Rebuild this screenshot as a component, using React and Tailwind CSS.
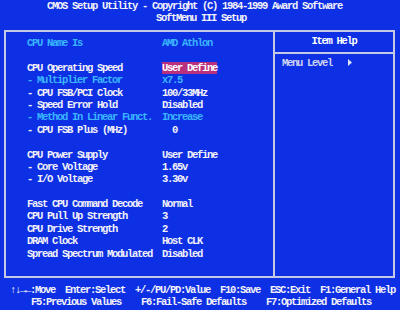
import React from "react";

const rows = [
  { l: "CPU Name Is", v: "AMD Athlon", c: true },
  null,
  { l: "CPU Operating Speed", v: "User Define", hl: true },
  { l: "- Multiplier Factor", v: "x7.5", c: true },
  { l: "- CPU FSB/PCI Clock", v: "100/33MHz" },
  { l: "- Speed Error Hold", v: "Disabled" },
  { l: "- Method In Linear Funct.", v: "Increase", c: true },
  { l: "- CPU FSB Plus (MHz)", v: "  0" },
  null,
  { l: "CPU Power Supply", v: "User Define" },
  { l: "- Core Voltage", v: "1.65v" },
  { l: "- I/O Voltage", v: "3.30v" },
  null,
  { l: "Fast CPU Command Decode", v: "Normal" },
  { l: "CPU Pull Up Strength", v: "3" },
  { l: "CPU Drive Strength", v: "2" },
  { l: "DRAM Clock", v: "Host CLK" },
  { l: "Spread Spectrum Modulated", v: "Disabled" },
];

export default function App() {
  return (
    <div
      className="w-[400px] h-[310px] overflow-hidden bg-[#0e30e4] text-[#f2f2f8] font-bold text-[10.5px] tracking-[-1.3px] whitespace-pre"
      style={{ fontFamily: '"Liberation Mono", "DejaVu Sans Mono", monospace' }}
    >
      <div className="h-[30px] pt-0">
        <div className="h-[12px] leading-[12px] pl-[47px]">
          CMOS Setup Utility - Copyright (C) 1984-1999 Award Software
        </div>
        <div className="h-[12px] leading-[12px] pl-[156px]">SoftMenu III Setup</div>
      </div>
      <div className="ml-[4px] w-[391px] h-[248px] border-2 border-[#c4cae6] flex">
        <div className="w-[267px] pt-[5px] pl-[21px]">
          {rows.map((r, i) =>
            r ? (
              <div key={i} className="flex h-[12.4px] leading-[12.4px]">
                <div className={"w-[135px] " + (r.c ? "text-[#3ab6ff]" : "")}>{r.l}</div>
                <div className={r.c ? "text-[#3ab6ff]" : ""}>
                  {r.hl ? (
                    <span className="bg-[#b8307e] text-white">{r.v}</span>
                  ) : (
                    r.v
                  )}
                </div>
              </div>
            ) : (
              <div key={i} className="h-[12.4px]" />
            )
          )}
        </div>
        <div className="flex-1 border-l-2 border-[#c4cae6] flex flex-col">
          <div className="h-[22px] border-b-2 border-[#c4cae6] flex items-center justify-center text-white">
            Item Help
          </div>
          <div className="pt-[5px] pl-[7px] h-[12.4px] leading-[12.4px] flex items-center text-[#cdd4f4]">
            <span>Menu Level   </span>
            <svg width="4" height="7" viewBox="0 0 4 7" className="ml-[1px]">
              <path d="M0 0 L4 3.5 L0 7 Z" fill="#dde2fa" />
            </svg>
          </div>
        </div>
      </div>
      <div className="pt-[6px]">
        <div className="h-[12px] leading-[12px] pl-[10px]">
          ↑↓→←:Move  Enter:Select  +/-/PU/PD:Value  F10:Save  ESC:Exit  F1:General Help
        </div>
        <div className="h-[12px] leading-[12px] pl-[31px]">
          F5:Previous Values    F6:Fail-Safe Defaults    F7:Optimized Defaults
        </div>
      </div>
    </div>
  );
}
